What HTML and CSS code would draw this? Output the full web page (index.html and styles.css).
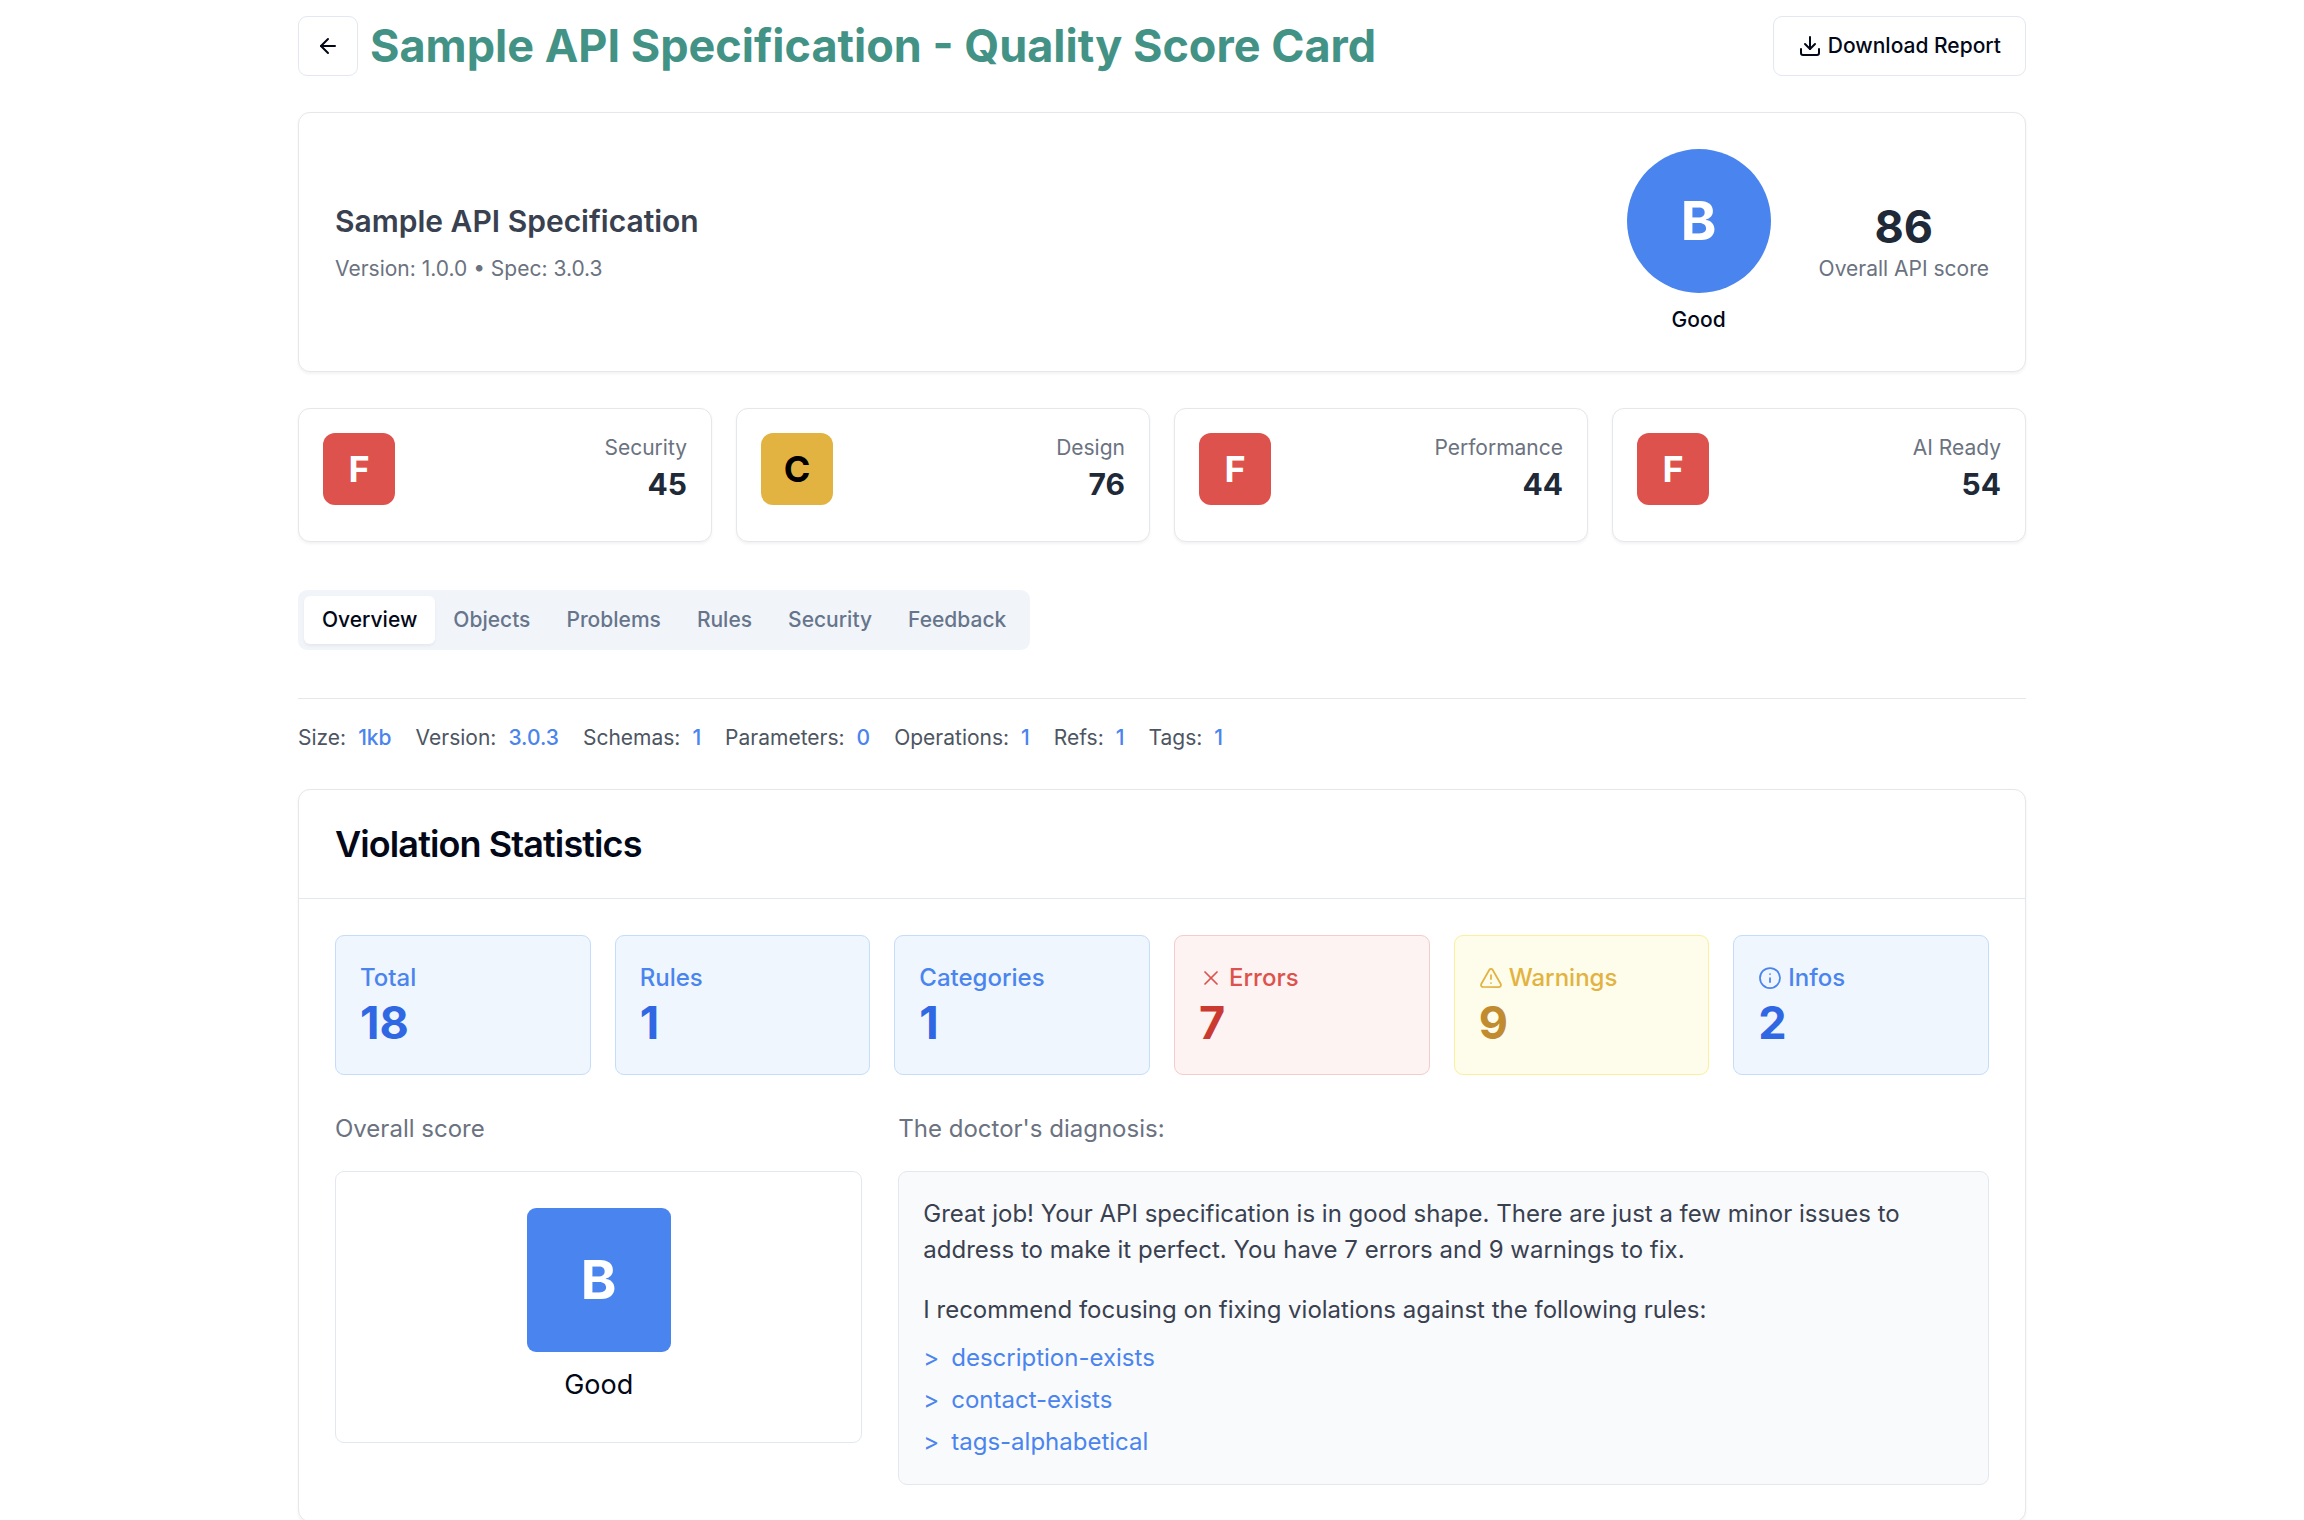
FILE: index.html
```html
<!DOCTYPE html>
<html lang="en">
<head>
<meta charset="utf-8">
<title>Sample API Specification - Quality Score Card</title>
<link rel="stylesheet" href="styles.css">
</head>
<body>
<main class="page">
  <header class="topbar">
    <div class="topbar-left">
      <button class="btn btn-icon" aria-label="Back"><svg class="icon" viewBox="0 0 24 24"><path d="m12 19-7-7 7-7"/><path d="M19 12H5"/></svg></button>
      <h1 class="page-title">Sample API Specification - Quality Score Card</h1>
    </div>
    <button class="btn btn-download"><svg class="icon" viewBox="0 0 24 24"><path d="M21 15v4a2 2 0 0 1-2 2H5a2 2 0 0 1-2-2v-4"/><path d="m7 10 5 5 5-5"/><path d="M12 15V3"/></svg>Download Report</button>
  </header>

  <section class="card summary">
    <div>
      <h2 class="summary-title">Sample API Specification</h2>
      <p class="muted">Version: 1.0.0 • Spec: 3.0.3</p>
    </div>
    <div class="summary-score">
      <div class="grade-col">
        <div class="grade grade-circle">B</div>
        <div class="grade-label">Good</div>
      </div>
      <div class="score-col">
        <div class="score-value">86</div>
        <div class="muted">Overall API score</div>
      </div>
    </div>
  </section>

  <section class="score-grid">
    <div class="card score-card"><div class="badge badge-f">F</div><div class="score-text"><div class="muted">Security</div><div class="score-num">45</div></div></div>
    <div class="card score-card"><div class="badge badge-c">C</div><div class="score-text"><div class="muted">Design</div><div class="score-num">76</div></div></div>
    <div class="card score-card"><div class="badge badge-f">F</div><div class="score-text"><div class="muted">Performance</div><div class="score-num">44</div></div></div>
    <div class="card score-card"><div class="badge badge-f">F</div><div class="score-text"><div class="muted">AI Ready</div><div class="score-num">54</div></div></div>
  </section>

  <nav class="tabs">
    <button class="tab tab-active">Overview</button>
    <button class="tab">Objects</button>
    <button class="tab">Problems</button>
    <button class="tab">Rules</button>
    <button class="tab">Security</button>
    <button class="tab">Feedback</button>
  </nav>

  <div class="facts">
    <div class="fact">Size:<b>1kb</b></div>
    <div class="fact">Version:<b>3.0.3</b></div>
    <div class="fact">Schemas:<b>1</b></div>
    <div class="fact">Parameters:<b>0</b></div>
    <div class="fact">Operations:<b>1</b></div>
    <div class="fact">Refs:<b>1</b></div>
    <div class="fact">Tags:<b>1</b></div>
  </div>

  <section class="card stats">
    <div class="stats-head"><h3 class="stats-title">Violation Statistics</h3></div>
    <div class="stats-body">
      <div class="stat-grid">
        <div class="stat stat-blue"><div class="stat-label">Total</div><div class="stat-value">18</div></div>
        <div class="stat stat-blue"><div class="stat-label">Rules</div><div class="stat-value">1</div></div>
        <div class="stat stat-blue"><div class="stat-label">Categories</div><div class="stat-value">1</div></div>
        <div class="stat stat-red"><div class="stat-label"><svg class="icon icon-thin" viewBox="0 0 24 24"><path d="M18 6 6 18"/><path d="m6 6 12 12"/></svg>Errors</div><div class="stat-value">7</div></div>
        <div class="stat stat-yellow"><div class="stat-label"><svg class="icon icon-thin" viewBox="0 0 24 24"><path d="m21.73 18-8-14a2 2 0 0 0-3.48 0l-8 14A2 2 0 0 0 4 21h16a2 2 0 0 0 1.73-3"/><path d="M12 9v4"/><path d="M12 17h.01"/></svg>Warnings</div><div class="stat-value">9</div></div>
        <div class="stat stat-blue"><div class="stat-label"><svg class="icon icon-thin" viewBox="0 0 24 24"><circle cx="12" cy="12" r="10"/><path d="M12 16v-4"/><path d="M12 8h.01"/></svg>Infos</div><div class="stat-value">2</div></div>
      </div>
      <div class="detail-grid">
        <div class="detail">
          <h4 class="detail-title">Overall score</h4>
          <div class="overall">
            <div class="grade grade-square">B</div>
            <div class="overall-label">Good</div>
          </div>
        </div>
        <div class="detail">
          <h4 class="detail-title">The doctor's diagnosis:</h4>
          <div class="diagnosis">
            <p class="diagnosis-text">Great job! Your API specification is in good shape. There are just a few minor issues to address to make it perfect. You have 7 errors and 9 warnings to fix.</p>
            <p class="diagnosis-lead">I recommend focusing on fixing violations against the following rules:</p>
            <ul class="rules">
              <li><span class="chevron">&gt;</span>description-exists</li>
              <li><span class="chevron">&gt;</span>contact-exists</li>
              <li><span class="chevron">&gt;</span>tags-alphabetical</li>
            </ul>
          </div>
        </div>
      </div>
    </div>
  </section>
</main>
</body>
</html>
```
FILE: styles.css
```css
* { box-sizing: border-box; margin: 0; padding: 0; }

html { height: 100%; overflow: hidden; }

body {
  height: 100%;
  overflow: hidden;
  background: #fff;
  color: #020817;
  font-family: Inter, "Liberation Sans", sans-serif;
  font-size: 24px;
  line-height: 36px;
}

.page { padding: 16px 278px 0 298px; }

.icon {
  width: 24px;
  height: 24px;
  flex: none;
  fill: none;
  stroke: currentColor;
  stroke-width: 2;
  stroke-linecap: round;
  stroke-linejoin: round;
}
.icon-thin { stroke-width: 1.75; }

.muted { font-size: 21px; line-height: 30px; color: #6b7280; }

.card {
  border: 1px solid #e5e7eb;
  border-radius: 12px;
  background: #fff;
  box-shadow: 0 1.5px 3px rgba(0, 0, 0, 0.05);
}

/* Header */
.topbar { display: flex; justify-content: space-between; align-items: center; }
.topbar-left { display: flex; align-items: center; gap: 12px; }
.btn {
  display: flex;
  align-items: center;
  justify-content: center;
  height: 60px;
  border: 1px solid #e2e8f0;
  border-radius: 9px;
  background: #fff;
  color: #020817;
  font: 500 21px/30px Inter, "Liberation Sans", sans-serif;
}
.btn-icon { width: 60px; }
.btn-download { gap: 6px; padding: 0 24px; }
.page-title { font-size: 45px; line-height: 54px; font-weight: 700; color: #439286; }

/* Summary */
.summary {
  display: flex;
  justify-content: space-between;
  align-items: center;
  margin-top: 36px;
  padding: 36px;
}
.summary-title {
  margin-bottom: 12px;
  font-size: 30px;
  line-height: 42px;
  font-weight: 600;
  color: #394150;
}
.summary-score { display: flex; align-items: center; gap: 48px; }
.grade {
  display: flex;
  align-items: center;
  justify-content: center;
  width: 144px;
  height: 144px;
  background: #4a84ee;
  color: #fff;
  font-size: 54px;
  line-height: 60px;
  font-weight: 700;
}
.grade-circle { border-radius: 50%; }
.grade-square { border-radius: 9px; }
.grade-label { margin-top: 12px; text-align: center; font-size: 21px; line-height: 30px; font-weight: 500; }
.score-col { text-align: center; }
.score-value { font-size: 45px; line-height: 54px; font-weight: 700; color: #202937; }

/* Category scores */
.score-grid { display: grid; grid-template-columns: repeat(4, 1fr); gap: 24px; margin-top: 36px; }
.score-card { display: flex; justify-content: space-between; padding: 24px 24px 36px; }
.badge {
  display: flex;
  align-items: center;
  justify-content: center;
  width: 72px;
  height: 72px;
  border-radius: 12px;
  font-size: 36px;
  line-height: 48px;
  font-weight: 700;
}
.badge-f { background: #dd524c; color: #fff; }
.badge-c { background: #e2b340; color: #000; }
.score-text { text-align: right; }
.score-num { font-size: 30px; line-height: 42px; font-weight: 700; color: #202937; }

/* Tabs */
.tabs {
  display: flex;
  width: max-content;
  margin-top: 48px;
  padding: 6px;
  border-radius: 9px;
  background: #f1f5f9;
}
.tab {
  padding: 9px 18px;
  border: 0;
  border-radius: 6px;
  background: transparent;
  color: #67758c;
  font: 500 21px/30px Inter, "Liberation Sans", sans-serif;
}
.tab-active { background: #fff; color: #020817; box-shadow: 0 1.5px 3px rgba(0, 0, 0, 0.05); }

/* Document facts */
.facts {
  display: flex;
  gap: 24px;
  margin-top: 48px;
  padding: 24px 0 36px;
  border-top: 1px solid #e5e7eb;
  font-size: 21px;
  line-height: 30px;
  color: #4d5562;
}
.fact { display: flex; gap: 12px; }
.fact b { font-weight: 500; color: #4a84ee; }

/* Violation statistics */
.stats-head { padding: 36px; border-bottom: 1px solid #e2e8f0; }
.stats-title { font-size: 36px; line-height: 36px; font-weight: 600; letter-spacing: -0.025em; }
.stats-body { padding: 36px; }
.stat-grid { display: grid; grid-template-columns: repeat(6, 1fr); gap: 24px; }
.stat { padding: 24px; border: 1px solid; border-radius: 9px; }
.stat-label { display: flex; align-items: center; gap: 6px; font-weight: 500; }
.stat-value { font-size: 45px; line-height: 54px; font-weight: 700; }
.stat-blue { background: #eff6fe; border-color: #c5dcfb; color: #4a84ee; }
.stat-blue .stat-value { color: #3068e3; }
.stat-red { background: #fcf3f2; border-color: #f3cccb; color: #dd524c; }
.stat-red .stat-value { color: #ca3a31; }
.stat-yellow { background: #fefceb; border-color: #fbf09c; color: #e2b340; }
.stat-yellow .stat-value { color: #c18b2f; }

.detail-grid {
  display: grid;
  grid-template-columns: repeat(3, 1fr);
  gap: 36px;
  align-items: start;
  margin-top: 36px;
}
.detail:last-child { grid-column: span 2; }
.detail-title { margin-bottom: 24px; font-size: 24px; font-weight: 400; color: #6b7280; }
.overall {
  display: flex;
  flex-direction: column;
  align-items: center;
  gap: 12px;
  padding: 36px;
  border: 1px solid #e2e8f0;
  border-radius: 9px;
}
.overall-label { font-size: 27px; line-height: 42px; font-weight: 400; }
.diagnosis {
  padding: 24px;
  border: 1px solid #e2e8f0;
  border-radius: 9px;
  background: #f9fafc;
  color: #394150;
}
.diagnosis-text { margin-bottom: 24px; }
.diagnosis-lead { margin-bottom: 12px; }
.rules { display: flex; flex-direction: column; gap: 6px; list-style: none; color: #4a84ee; }
.rules li { display: flex; }
.chevron { margin-right: 12px; }
```
